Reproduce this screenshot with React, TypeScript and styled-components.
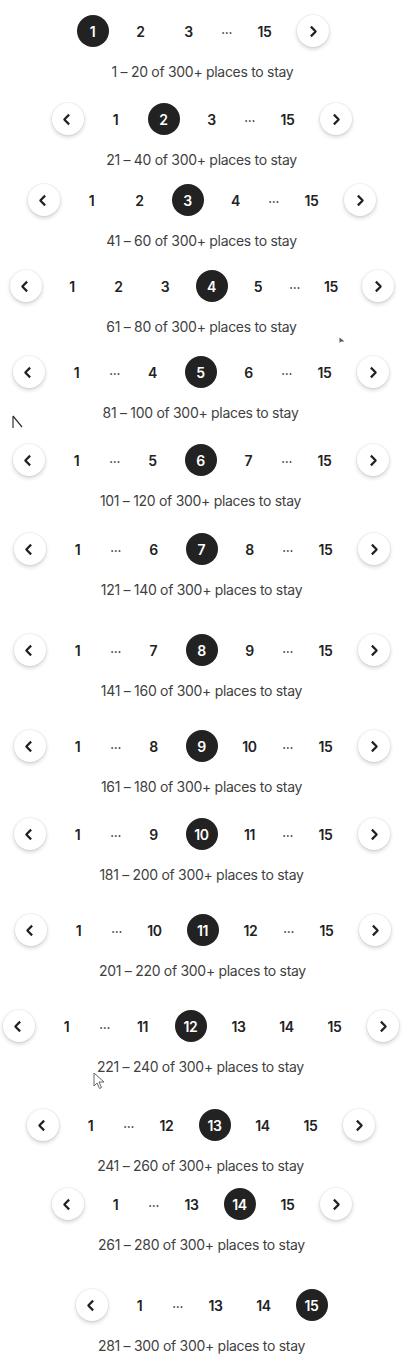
import React from "react";
import styled, { createGlobalStyle } from "styled-components";

const GlobalStyle = createGlobalStyle`
  html, body { margin: 0; padding: 0; background: #ffffff; }
  body {
    width: 407px;
    font-family: Inter, "Noto Sans", "Liberation Sans", sans-serif;
    color: #222222;
    -webkit-font-smoothing: antialiased;
  }
`;

const Page = styled.div`
  position: relative;
  width: 407px;
  min-height: 1368px;
  display: flex;
  flex-direction: column;
  align-items: center;
`;

const Block = styled.section<{ $top: number; $shift: number }>`
  display: flex;
  flex-direction: column;
  align-items: center;
  margin-top: ${(p) => p.$top}px;
  transform: translateX(${(p) => p.$shift}px);
`;

const Row = styled.nav<{ $gap: number }>`
  display: flex;
  align-items: center;
  gap: ${(p) => p.$gap}px;
  height: 32px;
`;

const PageNum = styled.span<{ $active?: boolean }>`
  width: 32px;
  height: 32px;
  border-radius: 50%;
  display: flex;
  align-items: center;
  justify-content: center;
  font-size: 14px;
  font-weight: 600;
  letter-spacing: -0.3px;
  color: ${(p) => (p.$active ? "#ffffff" : "#222222")};
  background: ${(p) => (p.$active ? "#222222" : "transparent")};
  flex-shrink: 0;
`;

const Ellipsis = styled.span`
  width: 12px;
  display: flex;
  justify-content: center;
  font-size: 11px;
  font-weight: 700;
  color: #222222;
  letter-spacing: -0.5px;
  line-height: 1;
  padding-bottom: 2px;
`;

const ArrowButton = styled.button`
  width: 32px;
  height: 32px;
  border-radius: 50%;
  border: none;
  padding: 0;
  background: #ffffff;
  color: #222222;
  display: flex;
  align-items: center;
  justify-content: center;
  box-shadow: 0 0 0 1px rgba(0, 0, 0, 0.04), 0 2px 4px rgba(0, 0, 0, 0.18);
  flex-shrink: 0;
  cursor: pointer;
`;

const Caption = styled.p`
  margin: 16px 0 0;
  font-size: 14px;
  line-height: 18px;
  font-weight: 400;
  letter-spacing: -0.3px;
  color: #3f3f3f;
  white-space: nowrap;
`;

const Pointer = styled.svg<{ $x: number; $y: number }>`
  position: absolute;
  left: ${(p) => p.$x}px;
  top: ${(p) => p.$y}px;
  overflow: visible;
`;

const Chevron = ({ dir }: { dir: "left" | "right" }) => (
  <svg
    viewBox="0 0 32 32"
    width={13}
    height={13}
    aria-hidden="true"
    style={{ display: "block", fill: "none", stroke: "currentColor", strokeWidth: 5.6, overflow: "visible" }}
  >
    {dir === "right" ? (
      <path d="m12 4 11.3 11.3a1 1 0 0 1 0 1.4L12 28" />
    ) : (
      <path d="M20 28 8.7 16.7a1 1 0 0 1 0-1.4L20 4" />
    )}
  </svg>
);

type Item = number | "gap";

const total = 15;

const rows: { cur: number; items: Item[]; top: number; shift: number; gap: number }[] = [
  { cur: 1, items: [1, 2, 3, "gap", 15], top: 15, shift: -1, gap: 16 },
  { cur: 2, items: [1, 2, 3, "gap", 15], top: 22, shift: -2, gap: 16 },
  { cur: 3, items: [1, 2, 3, 4, "gap", 15], top: 15, shift: -2, gap: 16 },
  { cur: 4, items: [1, 2, 3, 4, 5, "gap", 15], top: 20, shift: -2, gap: 14.5 },
  { cur: 5, items: [1, "gap", 4, 5, 6, "gap", 15], top: 20, shift: -3, gap: 16 },
  { cur: 6, items: [1, "gap", 5, 6, 7, "gap", 15], top: 22, shift: -3, gap: 16 },
  { cur: 7, items: [1, "gap", 6, 7, 8, "gap", 15], top: 23, shift: -2, gap: 16 },
  { cur: 8, items: [1, "gap", 7, 8, 9, "gap", 15], top: 35, shift: -2, gap: 16 },
  { cur: 9, items: [1, "gap", 8, 9, 10, "gap", 15], top: 30, shift: -2, gap: 16 },
  { cur: 10, items: [1, "gap", 9, 10, 11, "gap", 15], top: 22, shift: -2, gap: 16 },
  { cur: 11, items: [1, "gap", 10, 11, 12, "gap", 15], top: 30, shift: -1, gap: 16 },
  { cur: 12, items: [1, "gap", 11, 12, 13, 14, 15], top: 30, shift: -3, gap: 16 },
  { cur: 13, items: [1, "gap", 12, 13, 14, 15], top: 33, shift: -3, gap: 16 },
  { cur: 14, items: [1, "gap", 13, 14, 15], top: 13, shift: -2, gap: 16 },
  { cur: 15, items: [1, "gap", 13, 14, 15], top: 35, shift: -2, gap: 16 },
];

export default function App() {
  return (
    <>
      <GlobalStyle />
      <Page>
        {rows.map((r) => {
          const from = (r.cur - 1) * 20 + 1;
          const to = r.cur * 20;
          return (
            <Block key={r.cur} $top={r.top} $shift={r.shift}>
              <Row $gap={r.gap} aria-label="Search results pagination">
                {r.cur > 1 && (
                  <ArrowButton aria-label="Previous">
                    <Chevron dir="left" />
                  </ArrowButton>
                )}
                {r.items.map((it, i) =>
                  it === "gap" ? (
                    <Ellipsis key={`g${i}`}>…</Ellipsis>
                  ) : (
                    <PageNum key={it} $active={it === r.cur}>
                      {it}
                    </PageNum>
                  )
                )}
                {r.cur < total && (
                  <ArrowButton aria-label="Next">
                    <Chevron dir="right" />
                  </ArrowButton>
                )}
              </Row>
              <Caption>
                {from} – {to} of 300+ places to stay
              </Caption>
            </Block>
          );
        })}
        <Pointer $x={339} $y={337} width={7} height={7} viewBox="0 0 7 7">
          <path d="M0.5 0.5 L0.5 6 L2 4.5 L5.5 4.5 Z" fill="#555" />
        </Pointer>
        <Pointer $x={12} $y={415} width={12} height={14} viewBox="0 0 12 14">
          <path d="M1 1 L1 13 M1 1 L10 12" stroke="#333" strokeWidth={1.2} fill="none" />
        </Pointer>
        <Pointer $x={93} $y={1072} width={14} height={18} viewBox="0 0 14 18">
          <path d="M1 1 L1 14 L4 11 L6.5 16.5 L8.5 15.5 L6 10 L11 10 Z" stroke="#666" strokeWidth={1} fill="#fff" />
        </Pointer>
      </Page>
    </>
  );
}
